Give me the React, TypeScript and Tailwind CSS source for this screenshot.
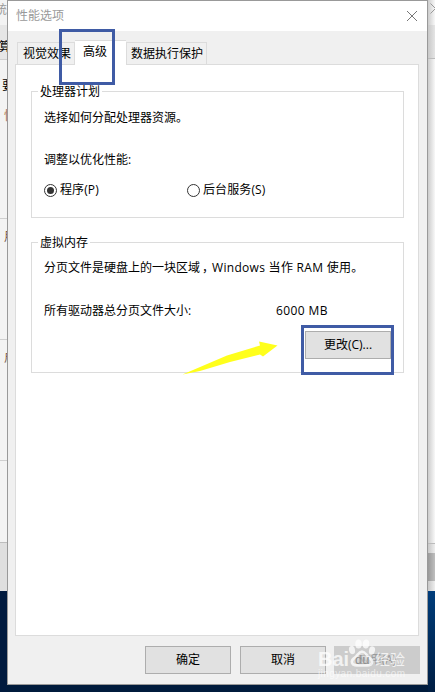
import { ReactNode } from "react";
import clsx from "clsx";

function GroupBox({
  title,
  className,
  children
}: {
  title: string;
  className: string;
  children: ReactNode;
}) {
  return (
    <section className={clsx("relative ml-[15px] w-[373px] border border-[#dcdcdc] pl-3", className)}>
      <h2 className="absolute -top-[9px] left-[6px] bg-white px-0.5 leading-[18px]">{title}</h2>
      {children}
    </section>
  );
}

function Radio({ label, checked }: { label: string; checked?: boolean }) {
  return (
    <label className="flex items-center gap-[3px]">
      <span className="flex h-[13px] w-[13px] items-center justify-center rounded-full border border-[#333333] bg-white">
        {checked && <span className="h-[7px] w-[7px] rounded-full bg-[#333333]" />}
      </span>
      <span className="tracking-[0.1px]">{label}</span>
    </label>
  );
}

function Button({ children }: { children: ReactNode }) {
  return (
    <button className="flex h-[28px] w-[86px] items-center justify-center border border-[#adadad] bg-[#e1e1e1]">
      {children}
    </button>
  );
}

function LeftEdge() {
  return (
    <div className="flex h-[692px] w-[7px] shrink-0 flex-col overflow-hidden whitespace-nowrap bg-[#f3f3f3]">
      <div className="h-[25px] shrink-0 pt-px text-[#999999]">
        <span className="-ml-[5px] block leading-[18px]">统</span>
      </div>
      <div className="h-[35px] shrink-0 border-b border-[#cfcfcf] bg-[#e6e6e6] pt-[13px]">
        <span className="-ml-px block leading-[18px]">算</span>
      </div>
      <div className="h-[56px] shrink-0 pt-[17px]">
        <span className="ml-0.5 block leading-[18px]">要</span>
      </div>
      <div className="h-[103px] shrink-0 border-b border-[#cfcfcf]">
        <span className="-mt-[9px] ml-[4px] block leading-[18px] text-[#a46f50]">性</span>
      </div>
      <div className="h-[121px] shrink-0 border-b border-[#cfcfcf] pt-[9px]">
        <span className="ml-[4px] block leading-[18px] text-[#765548]">用</span>
      </div>
      <div className="h-[121px] shrink-0 border-b border-[#cfcfcf] pt-[9px]">
        <span className="ml-[4px] block leading-[18px] text-[#765548]">启</span>
      </div>
      <div className="h-[82px] shrink-0 border-b border-[#bdbdbd]" />
      <div className="h-[48px] shrink-0 bg-[#dfdfdf]" />
      <div className="grow bg-[#001a3e]" />
    </div>
  );
}

function RightEdge() {
  return (
    <div className="flex h-[692px] w-[7px] shrink-0 flex-col overflow-hidden bg-gradient-to-r from-[#cccccc] to-[#f8f8f8]">
      <div className="h-[25px] shrink-0 pt-[3px]">
        <svg className="ml-[2px]" width="11" height="11" viewBox="0 0 11 11" stroke="#999" fill="none">
          <path d="M.5.5l10 10M10.5.5l-10 10" />
        </svg>
      </div>
      <div className="h-[34px] shrink-0 border-b border-[#bbbbbb] bg-gradient-to-r from-[#c8c8c8] to-[#e5e5e5]" />
      <div className="h-[484px] shrink-0" />
      <div className="h-[10px] shrink-0 border-t border-[#bbbbbb] bg-gradient-to-r from-[#c7c7c7] to-[#eeeeee]" />
      <div className="h-[28px] shrink-0 bg-gradient-to-r from-[#999999] to-[#bfbfbf]" />
      <div className="h-[10px] shrink-0 bg-gradient-to-r from-[#c7c7c7] to-[#eeeeee]" />
      <div className="grow bg-gradient-to-b from-[#003d7b] to-[#001e43]" />
    </div>
  );
}

function Watermark() {
  return (
    <div className="absolute top-[639px] left-[318px] h-[42px] w-[90px] text-white/75">
      <svg className="absolute top-0 left-[30px]" width="28" height="28" viewBox="0 0 28 28">
        <g fill="currentColor">
          <ellipse cx="4" cy="11" rx="3" ry="4.2" transform="rotate(-12 4 11)" />
          <ellipse cx="10.5" cy="5" rx="3.2" ry="4.5" />
          <ellipse cx="18" cy="5" rx="3.2" ry="4.5" transform="rotate(8 18 5)" />
          <ellipse cx="24" cy="11.5" rx="3" ry="4.2" transform="rotate(12 24 11.5)" />
        </g>
        <path
          d="M14 12.500c-3 0-4 3-6 5-3 2.500-5 3.500-4 6.500 1 3 5 2.500 10 2.500s9 .5 10-2.500c1-3-1-4-4-6.500-2-2-3-5-6-5z"
          fill="#fff"
          fillOpacity="0.25"
          stroke="currentColor"
          strokeWidth="2.500"
        />
      </svg>
      <span className="absolute top-[9px] left-0 font-['Liberation_Sans'] text-[20px] leading-[22px] font-bold">Bai</span>
      <span className="absolute top-[13px] left-[37px] font-['Liberation_Sans'] text-[13px] leading-[16px] text-[#909090]">du</span>
      <span className="absolute top-[10px] left-[57px] text-[15px] leading-[20px]">经验</span>
      <span className="absolute top-[29px] left-0 font-['Liberation_Sans'] text-[10px] leading-[12px] tracking-[0.4px] text-white/60">
        jingyan.baidu.com
      </span>
    </div>
  );
}

export default function App() {
  return (
    <div className="relative flex h-[692px] w-[435px] overflow-hidden bg-[#001b3c] font-['Open_Sans','Noto_Sans_CJK_SC',sans-serif] text-[12px] leading-[18px] text-black">
      <LeftEdge />
      <main className="flex h-[685px] w-[421px] shrink-0 flex-col border border-[#999999] bg-[#f0f0f0]">
        <header className="flex h-[30px] shrink-0 items-center justify-between bg-white pr-[9px] pl-2 text-[#999999]">
          <h1>性能选项</h1>
          <svg width="12" height="12" viewBox="0 0 12 12" stroke="#777" fill="none">
            <path d="M1 1l10 10M11 1L1 11" />
          </svg>
        </header>
        <nav className="ml-[9px] flex h-[33px] shrink-0 items-end whitespace-nowrap">
          <div className="h-[22px] w-[58px] border border-b-0 border-[#dcdcdc] pl-[5px] leading-[22px]">视觉效果</div>
          <div className="z-10 -mb-px h-[25px] w-[51px] border-t border-[#dcdcdc] bg-white pl-2 leading-[22px]">高级</div>
          <div className="h-[22px] w-[81px] border border-b-0 border-[#dcdcdc] pl-1 leading-[22px]">数据执行保护</div>
        </nav>
        <div className="ml-[7px] h-[572px] w-[404px] shrink-0 border border-[#dcdcdc] bg-white pt-[26px]">
          <GroupBox title="处理器计划" className="h-[127px] pt-[17px]">
            <p>选择如何分配处理器资源。</p>
            <p className="mt-6">调整以优化性能:</p>
            <div className="mt-3 grid grid-cols-[143px_1fr]">
              <Radio label="程序(P)" checked />
              <Radio label="后台服务(S)" />
            </div>
          </GroupBox>
          <GroupBox title="虚拟内存" className="mt-6 h-[131px] pt-[16px]">
            <p className="flex h-[18px] whitespace-nowrap">
              <span>分页文件是硬盘上的一块区域</span>
              <span className="w-3 pl-[2px]">，</span>
              <span className="tracking-[0.3px]">Windows 当作 RAM 使用。</span>
            </p>
            <div className="mt-[25px] grid grid-cols-[232px_1fr]">
              <span>所有驱动器总分页文件大小:</span>
              <span className="tracking-[0.4px]">6000 MB</span>
            </div>
            <div className="mt-[11px] ml-[261px]">
              <Button>更改(C)...</Button>
            </div>
          </GroupBox>
        </div>
        <footer className="mt-[10px] ml-[137px] flex gap-[9px]">
          <Button>确定</Button>
          <Button>取消</Button>
          <div className="-ml-px flex h-[28px] w-[86px] items-center justify-center bg-[#cccccc] text-[#999999]">
            应用(A)
          </div>
        </footer>
      </main>
      <RightEdge />
      <div className="absolute top-[29px] left-[59px] z-20 h-[56px] w-[56px] border-[3px] border-[#3f5ba5]" />
      <div className="absolute top-[325px] left-[301px] h-[50px] w-[93px] border-[3px] border-[#3f5ba5]" />
      <svg className="absolute top-[340px] left-[180px]" width="100" height="36" viewBox="0 0 100 36">
        <path d="M2.500 34.500L47 15.500 80 5.500 79 1.500 97.500 5.500 83 16.500 80 14.500 50 22 20 31Z" fill="#ffff1c" />
      </svg>
      <Watermark />
    </div>
  );
}
